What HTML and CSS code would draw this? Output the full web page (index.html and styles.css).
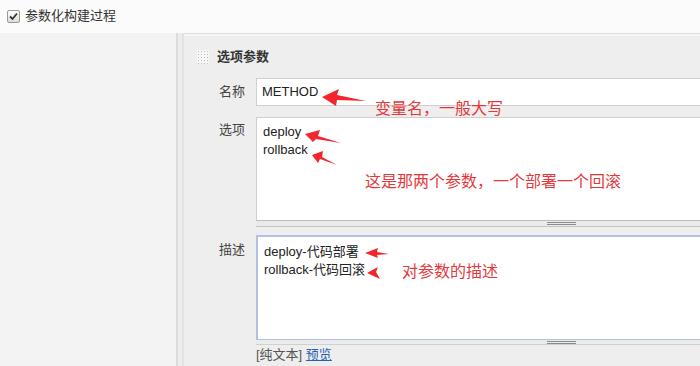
FILE: index.html
```html
<!DOCTYPE html>
<html lang="zh">

<head>
  <title>参数化构建过程</title>
  <meta charset="utf-8">
  <link rel="stylesheet" href="styles.css">
</head>

<body>
  <div class="top">
    <span class="check">
      <svg width="9" height="9" viewBox="0 0 9 9"><path d="M1 4.5 L3.5 7 L8 1.5" fill="none" stroke="#333" stroke-width="1.8"/></svg>
    </span>
    <label>参数化构建过程</label>
  </div>

  <div class="main">
    <div class="gutter"></div>
    <div class="rail"></div>
    <div class="panel">
      <div class="panel-head">
        <span class="grip"></span>
        <b>选项参数</b>
      </div>

      <div class="row">
        <label class="name-label">名称</label>
        <div class="field">
          <div class="input">METHOD</div>
        </div>
      </div>

      <div class="row row-choices">
        <label>选项</label>
        <div class="field">
          <div class="textarea choices">deploy<br>rollback</div>
          <div class="resizer"><span></span></div>
        </div>
      </div>

      <div class="row row-desc">
        <label>描述</label>
        <div class="field">
          <div class="textarea desc">deploy-代码部署<br>rollback-代码回滚</div>
          <div class="resizer short"><span></span></div>
          <div class="format">[纯文本] <a href="#">预览</a></div>
        </div>
      </div>
    </div>
  </div>

  <!-- annotations drawn on top of the screenshot -->
  <svg class="marks" width="700" height="366" viewBox="0 0 700 366">
    <polygon points="322,97 339,89 337,95 366,101 337,100 336,106" />
    <polygon points="305,134 320,130 318,136 341,143 316,139 313,142" />
    <polygon points="312,155 323,151 322,157 337,165 320,159 318,163" />
    <polygon points="365,253 378,248 377,252 389,254 377,255 378,258" />
    <polygon points="367,273 378,267 376,272 380,279" />
  </svg>
  <div class="note note-name">变量名，一般大写</div>
  <div class="note note-choices">这是那两个参数，一个部署一个回滚</div>
  <div class="note note-desc">对参数的描述</div>
</body>

</html>
```

FILE: styles.css
```css
html,
body {
  height: 100vh;
  padding: 0;
  margin: 0;
  overflow: hidden;
}

body {
  color: #333;
  font: 13px/18px "Liberation Sans", "Noto Sans CJK SC", sans-serif;
  background: #f2f2f2;
  position: relative;
}

.top {
  height: 33px;
  background: #fbfbfb;
  display: flex;
  align-items: center;
  padding-left: 7px;
  padding-bottom: 1px;
  box-sizing: border-box;
}

.check {
  width: 11px;
  height: 11px;
  border: 1px solid #9a9a9a;
  border-radius: 2px;
  background: linear-gradient(#fdfdfd, #dcdcdc);
  display: flex;
  align-items: center;
  justify-content: center;
  margin-right: 5px;
}

.main {
  display: flex;
  height: 333px;
}

.gutter {
  flex: none;
  width: 176px;
  background: #f3f3f3;
}

.rail {
  flex: none;
  width: 4px;
  border-left: 2px solid #dcdcdc;
  border-right: 2px solid #e2e2e2;
  background: #ececec;
}

.panel {
  flex: 1;
  min-width: 0;
  background: #eeeeee;
  border-top: 1px solid #dcdcdc;
  box-shadow: inset 0 2px 0 #f6f6f6;
  padding: 15px 0 0 13px;
  box-sizing: border-box;
}

.panel-head {
  display: flex;
  align-items: center;
  height: 16px;
  margin-bottom: 13px;
}

.panel-head b {
  color: #333;
  margin-left: 8px;
}

.grip {
  width: 12px;
  height: 14px;
  background-color: #f7f7f7;
  background-image: radial-gradient(circle, #bcbcbc 0.9px, transparent 1px);
  background-size: 3px 3px;
}

.row {
  display: grid;
  grid-template-columns: 59px 1fr;
}

.row label {
  color: #444;
  text-align: right;
  padding-right: 11px;
}

.name-label {
  align-self: center;
}

.input {
  height: 26px;
  line-height: 26px;
  border: 1px solid #cfcfcf;
  border-right: none;
  background: #fff;
  color: #222;
  padding-left: 5px;
}

.row-choices {
  margin-top: 11px;
}

.row-choices label {
  padding-top: 4px;
}

.textarea {
  background: #fff;
  color: #222;
  padding-left: 6px;
}

.choices {
  height: 97px;
  border: 1px solid #cfcfcf;
  border-right: none;
  border-bottom-color: #bdbdbd;
  padding-top: 5px;
}

.resizer {
  height: 5px;
  background: #ebebeb;
  border-bottom: 1px solid #c4c4c4;
  display: flex;
  align-items: center;
}

.resizer span {
  width: 29px;
  height: 1px;
  margin-left: 291px;
  border-top: 1px solid #8c8c8c;
  border-bottom: 1px solid #8c8c8c;
}

.resizer.short {
  height: 4px;
  border-bottom-color: #d0d0d0;
}

.row-desc {
  margin-top: 8px;
}

.row-desc label {
  padding-top: 6px;
}

.desc {
  height: 96px;
  border: 2px solid #b3c0e1;
  border-right: none;
  border-bottom-width: 1px;
  padding-top: 6px;
}

.format {
  color: #555;
  padding-top: 1px;
}

.format a {
  color: #2b5fb4;
}

.marks {
  position: absolute;
  top: 0;
  left: 0;
  pointer-events: none;
}

.marks polygon {
  fill: #f2262c;
}

.note {
  position: absolute;
  color: #e4393c;
  font: 16px/20px "Noto Sans CJK SC", sans-serif;
  white-space: nowrap;
}

.note-name {
  left: 375px;
  top: 97px;
}

.note-choices {
  left: 365px;
  top: 170px;
}

.note-desc {
  left: 402px;
  top: 260px;
}
```
